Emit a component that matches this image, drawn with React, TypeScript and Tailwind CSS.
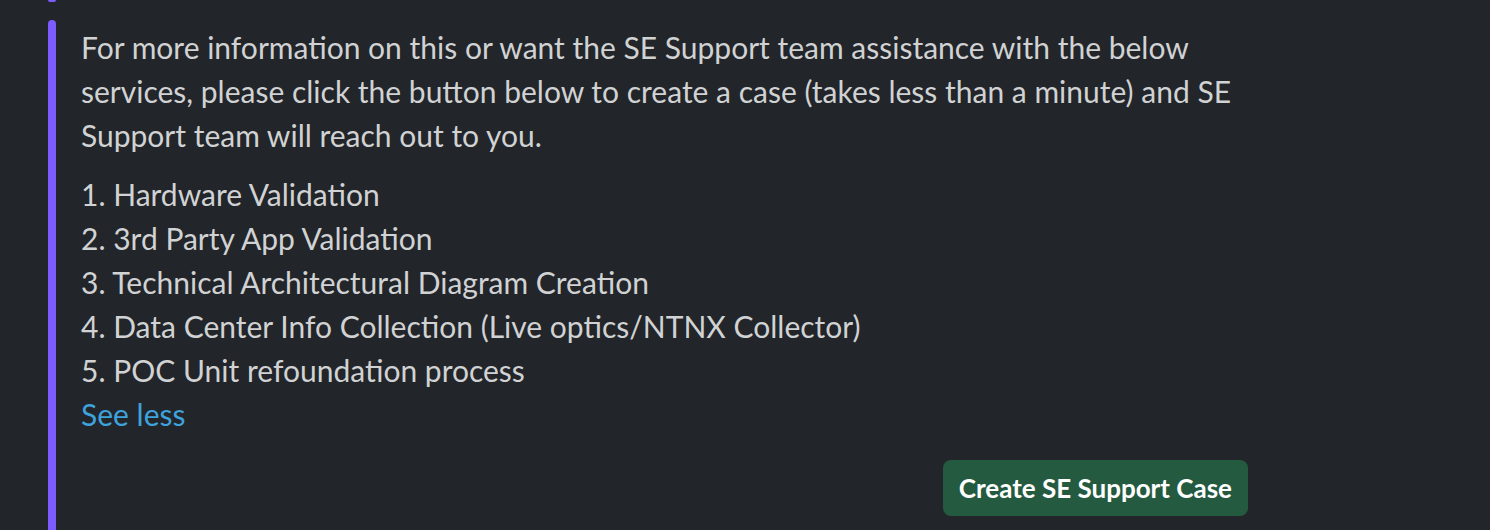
import React from "react";

const services = [
  "Hardware Validation",
  "3rd Party App Validation",
  "Technical Architectural Diagram Creation",
  "Data Center Info Collection (Live optics/NTNX Collector)",
  "POC Unit refoundation process",
];

const App = () => {
  return (
    <div className="w-[1490px] h-[530px] bg-[#222529] overflow-hidden font-['Lato','Liberation_Sans',sans-serif] text-[#d1d2d3]">
      {/* end of previous attachment */}
      <div className="ml-[48px] w-[8px] h-[4px] -mt-[2px] rounded-full bg-[#7c5cff]" />

      <div className="flex mt-[18px]">
        <div className="ml-[48px] w-[8px] rounded-t-full bg-[#7c5cff] h-[600px] shrink-0" />
        <div className="ml-[25px] w-[1167px] pt-[5px]">
          <p className="text-[30px] leading-[44px]">
            For more information on this or want the SE Support team assistance with the below services, please click
            the button below to create a case (takes less than a minute) and SE Support team will reach out to you.
          </p>
          <ol className="mt-[15px] text-[30px] leading-[44px]">
            {services.map((s, i) => (
              <li key={s}>
                {i + 1}. {s}
              </li>
            ))}
          </ol>
          <a className="block text-[30px] leading-[44px] text-[#3ea2dc] w-fit cursor-pointer">See less</a>
          <div className="flex justify-end mt-[24px]">
            <button className="h-[56px] px-[16px] rounded-[8px] bg-[#245a3f] text-white font-bold text-[26px]">
              Create SE Support Case
            </button>
          </div>
        </div>
      </div>
    </div>
  );
};

export default App;
